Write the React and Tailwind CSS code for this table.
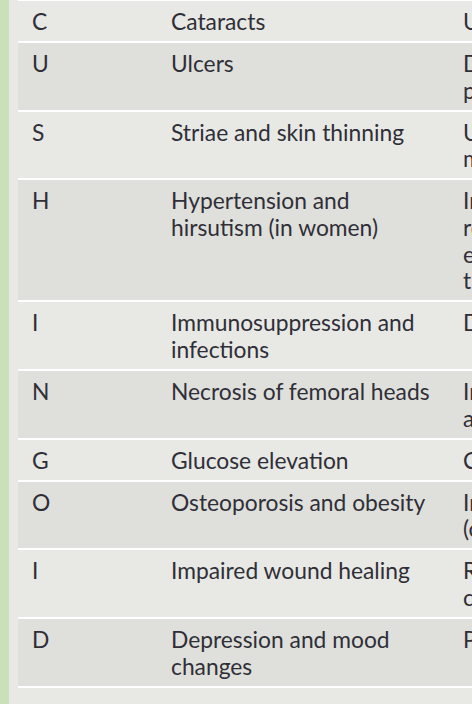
import React from "react";

const rows = [
  { l: "C", a: ["Cataracts"], b: ["Usually posterior subcapsular"] },
  { l: "U", a: ["Ulcers"], b: ["Dyspepsia and peptic ulcer", "particularly with NSAIDs"] },
  { l: "S", a: ["Striae and skin thinning"], b: ["Usually with prolonged", "moderate to high doses"] },
  { l: "H", a: ["Hypertension and", "hirsutism (in women)"], b: ["Increased risk of", "renal sodium retention,", "especially in patients", "treated with high doses"] },
  { l: "I", a: ["Immunosuppression and", "infections"], b: ["Dose-dependent risk"] },
  { l: "N", a: ["Necrosis of femoral heads"], b: ["Increased risk with high", "and prolonged doses"] },
  { l: "G", a: ["Glucose elevation"], b: ["Common"] },
  { l: "O", a: ["Osteoporosis and obesity"], b: ["Increased fracture risk", "(central adiposity)"] },
  { l: "I", a: ["Impaired wound healing"], b: ["Reduced fibroblast", "collagen synthesis"] },
  { l: "D", a: ["Depression and mood", "changes"], b: ["Psychiatric effects"] },
];

export default function App() {
  return (
    <div
      className="w-[472px] h-[704px] overflow-hidden bg-[#e8e8e4] flex text-[#2f2f38]"
      style={{ fontFamily: "Lato, 'Open Sans', sans-serif" }}
    >
      <div className="w-[9px] shrink-0 bg-[#c9e0b9]" />
      <div className="ml-[9px] flex-1 flex flex-col overflow-hidden">
        <div className="h-px bg-white" />
        {rows.map((r, i) => (
          <div
            key={i}
            className={`flex text-[22.8px] leading-[26.67px] pt-[7px] pb-[6.33px] ${
              i % 2 === 1 ? "bg-[#dfdfdb]" : "bg-[#e8e8e4]"
            } ${i > 0 ? "border-t-2 border-white" : ""}`}
          >
            <div className="w-[139px] shrink-0 pl-[14px]">{r.l}</div>
            <div className="w-[292px] shrink-0 pl-[14px]">
              {r.a.map((t, j) => (
                <div key={j} className="whitespace-nowrap">{t}</div>
              ))}
            </div>
            <div className="shrink-0 pl-[14px]">
              {r.b.map((t, j) => (
                <div key={j} className="whitespace-nowrap">{t}</div>
              ))}
            </div>
          </div>
        ))}
        <div className="border-t-2 border-white" />
      </div>
    </div>
  );
}
